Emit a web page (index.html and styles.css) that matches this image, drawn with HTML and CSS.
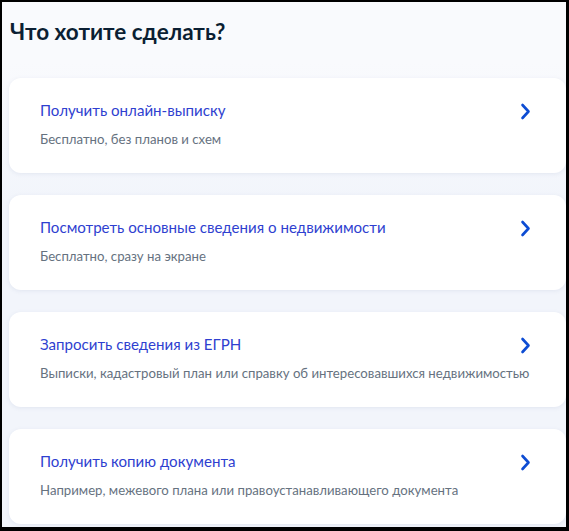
FILE: index.html
```html
<!DOCTYPE html>
<html lang="ru">
<head>
  <meta charset="UTF-8" />
  <meta name="viewport" content="width=device-width, initial-scale=1.0" />
  <title>Что хотите сделать?</title>
  <link rel="stylesheet" href="styles.css">
</head>
<body>
  <div id="screen">
    <h1>Что хотите сделать?</h1>

    <!-- Список услуг -->
    <ul class="actions">
      <li class="action">
        <div class="action-row">
          <span class="action-title">Получить онлайн-выписку</span>
          <svg class="chevron" width="11" height="17" viewBox="0 0 11 17"><path d="M2.5 2 L8.5 8.5 L2.5 15" /></svg>
        </div>
        <div class="action-note">Бесплатно, без планов и схем</div>
      </li>
      <li class="action">
        <div class="action-row">
          <span class="action-title">Посмотреть основные сведения о недвижимости</span>
          <svg class="chevron" width="11" height="17" viewBox="0 0 11 17"><path d="M2.5 2 L8.5 8.5 L2.5 15" /></svg>
        </div>
        <div class="action-note">Бесплатно, сразу на экране</div>
      </li>
      <li class="action">
        <div class="action-row">
          <span class="action-title">Запросить сведения из ЕГРН</span>
          <svg class="chevron" width="11" height="17" viewBox="0 0 11 17"><path d="M2.5 2 L8.5 8.5 L2.5 15" /></svg>
        </div>
        <div class="action-note">Выписки, кадастровый план или справку об интересовавшихся недвижимостью</div>
      </li>
      <li class="action">
        <div class="action-row">
          <span class="action-title">Получить копию документа</span>
          <svg class="chevron" width="11" height="17" viewBox="0 0 11 17"><path d="M2.5 2 L8.5 8.5 L2.5 15" /></svg>
        </div>
        <div class="action-note">Например, межевого плана или правоустанавливающего документа</div>
      </li>
    </ul>
  </div>
</body>
</html>
```

FILE: styles.css
```css
body {
  margin: 0;
  padding: 0;
  background: #000;
  font-family: Lato, "Open Sans", sans-serif;
  height: 531px;
  overflow: hidden;
}
#screen {
  margin: 2px 3px 0 2px;
  height: 525px;
  overflow: hidden;
  background: linear-gradient(#f9fafd 0, #f9fafd 60px, #f2f5fb 200px, #f2f5fb 100%);
}
h1 {
  margin: 0;
  padding: 15px 0 0 8px;
  font-size: 22.5px;
  line-height: 30px;
  font-weight: 700;
  color: #0b1f33;
}
.actions {
  list-style-type: none;
  margin: 31px 0 0 7px;
  padding: 0;
}
.action {
  background: #fff;
  border-radius: 12px;
  box-shadow: 0 1px 4px rgba(107, 124, 168, 0.12);
  padding: 22px 35px 23px 31px;
  height: 50px;
  margin-bottom: 22px;
}
.action-row {
  display: flex;
  align-items: center;
  justify-content: space-between;
  height: 20px;
}
.action-title {
  font-size: 15.1px;
  line-height: 20px;
  color: #2f3fd0;
}
.chevron {
  display: block;
  margin-top: 3px;
}
.chevron path {
  fill: none;
  stroke: #0d4cd3;
  stroke-width: 2.6;
  stroke-linecap: round;
  stroke-linejoin: round;
}
.action-note {
  margin-top: 11px;
  font-size: 13.2px;
  line-height: 17px;
  color: #66727f;
}
```
